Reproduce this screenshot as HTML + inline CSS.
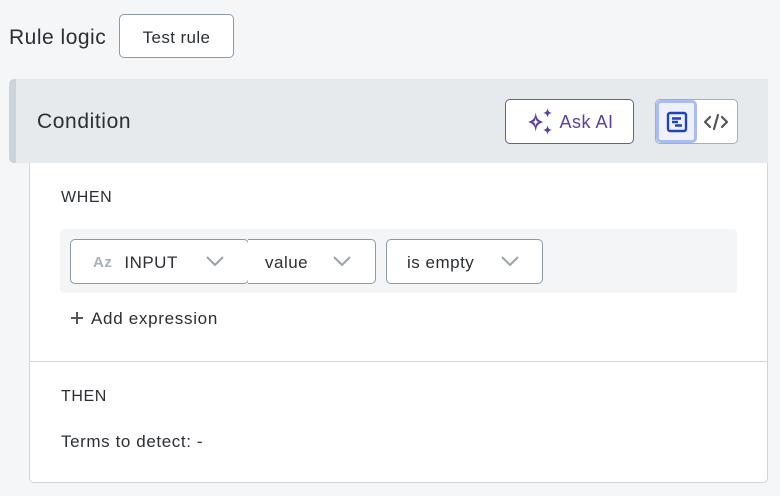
<!DOCTYPE html>
<html><head><meta charset="utf-8"><style>
*{box-sizing:border-box;margin:0;padding:0}
body{width:780px;height:496px;background:#f5f6f8;font-family:"Liberation Sans",sans-serif;color:#2b2f33;position:relative;overflow:hidden;letter-spacing:0.4px}
.abs{position:absolute}
.title{left:9px;top:26px;font-size:21px;letter-spacing:0.5px}
.btn{left:119px;top:14px;width:115px;height:44px;border:1px solid #8a9ba6;border-radius:5px;background:#fff;font-size:17px;display:flex;align-items:center;justify-content:center;padding-top:3px}
.head{left:9px;top:79px;width:759px;height:84px;background:#e6eaed;border-radius:5px 0 0 5px;border-left:7px solid #cad4da}
.cond{left:37px;top:110px;font-size:21px;letter-spacing:0.6px}
.ask{left:505px;top:99px;width:129px;height:45px;border:1px solid #6e56a8;border-radius:5px;background:#fff;color:#5b3f9a;font-size:18px;display:flex;align-items:center;justify-content:center;gap:4px;letter-spacing:0.5px;padding-top:1px}
.tog{left:655px;top:99px;width:83px;height:45px;border:1px solid #a3b0b8;border-radius:5px;background:#fff}
.tog .a{position:absolute;left:0;top:0;width:41px;height:43px;background:#eef1fb;border:3px solid #a9bdf2;border-radius:5px;display:flex;align-items:center;justify-content:center}
.body{left:29px;top:163px;width:739px;height:320px;background:#fff;border:1px solid #ccd5da;border-top:none;border-radius:0 0 5px 5px}
.lbl{font-size:16px;letter-spacing:0.6px}
.row{left:60px;top:229px;width:677px;height:64px;background:#f4f5f7;border-radius:4px}
.sel{height:45px;top:239px;border:1px solid #8a9ba6;border-radius:5px;background:#fff;font-size:17px;display:flex;align-items:center;letter-spacing:0.5px;padding-top:2px}
.chev{position:absolute;top:14px}
</style></head><body>
<div class="abs title">Rule logic</div>
<div class="abs btn">Test rule</div>
<div class="abs head"></div>
<div class="abs cond">Condition</div>
<div class="abs ask"><svg width="30" height="30" viewBox="0 0 28 28" fill="#5b3f9a"><path d="M10 5 C11 11 12 12 17 14 C12 16 11 17 10 23 C9 17 8 16 3 14 C8 12 9 11 10 5Z M10 10 C9.5 13 9 13.5 7 14 C9 14.5 9.5 15 10 18 C10.5 15 11 14.5 13 14 C11 13.5 10.5 13 10 10Z" fill-rule="evenodd"/><path d="M21 1 C21.6 4 22 4.5 25 5.5 C22 6.5 21.6 7 21 10 C20.4 7 20 6.5 17 5.5 C20 4.5 20.4 4 21 1Z"/><path d="M21 17 C21.6 20 22 20.5 25 21.5 C22 22.5 21.6 23 21 26 C20.4 23 20 22.5 17 21.5 C20 20.5 20.4 20 21 17Z"/></svg>Ask AI</div>
<div class="abs tog"><div class="a"><svg width="22" height="22" viewBox="0 0 22 22" fill="none" stroke="#1f44b8" stroke-width="2.4"><rect x="2" y="2" width="18" height="18" rx="2"/><path d="M6 7.5h9M6 11h6M9 14.5h7"/></svg></div>
<svg style="position:absolute;left:47px;top:12px" width="26" height="20" viewBox="0 0 26 20" fill="none" stroke="#555" stroke-width="2.2" stroke-linecap="round" stroke-linejoin="round"><path d="M7 5 2 10l5 5M19 5l5 5-5 5M15 3 11 17"/></svg></div>
<div class="abs body"></div>
<div class="abs lbl" style="left:61px;top:189px">WHEN</div>
<div class="abs row"></div>
<div class="abs sel" style="left:70px;width:179px"><span style="color:#aab2b8;font-weight:bold;font-size:15px;margin-left:22px">Az</span><span style="margin-left:12px">INPUT</span><svg class="chev" style="left:134px" width="20" height="14" viewBox="0 0 20 14" fill="none" stroke="#9aa3a9" stroke-width="2"><path d="M2 3l8 8 8-8"/></svg></div>
<div class="abs sel" style="left:248px;width:128px;border-left:none;border-radius:0 5px 5px 0"><span style="margin-left:17px">value</span><svg class="chev" style="left:84px" width="20" height="14" viewBox="0 0 20 14" fill="none" stroke="#9aa3a9" stroke-width="2"><path d="M2 3l8 8 8-8"/></svg></div>
<div class="abs sel" style="left:386px;width:157px"><span style="margin-left:20px">is empty</span><svg class="chev" style="left:113px" width="20" height="14" viewBox="0 0 20 14" fill="none" stroke="#9aa3a9" stroke-width="2"><path d="M2 3l8 8 8-8"/></svg></div>
<svg class="abs" style="left:70px;top:311px" width="14" height="14" viewBox="0 0 14 14" stroke="#555" stroke-width="2"><path d="M7 1v12M1 7h12"/></svg>
<div class="abs" style="left:91px;top:309px;font-size:17px;letter-spacing:0.7px">Add expression</div>
<div class="abs" style="left:30px;top:361px;width:737px;height:1px;background:#ccd5da"></div>
<div class="abs lbl" style="left:61px;top:388px">THEN</div>
<div class="abs" style="left:61px;top:432px;font-size:17px;letter-spacing:0.6px">Terms to detect: -</div>
</body></html>
